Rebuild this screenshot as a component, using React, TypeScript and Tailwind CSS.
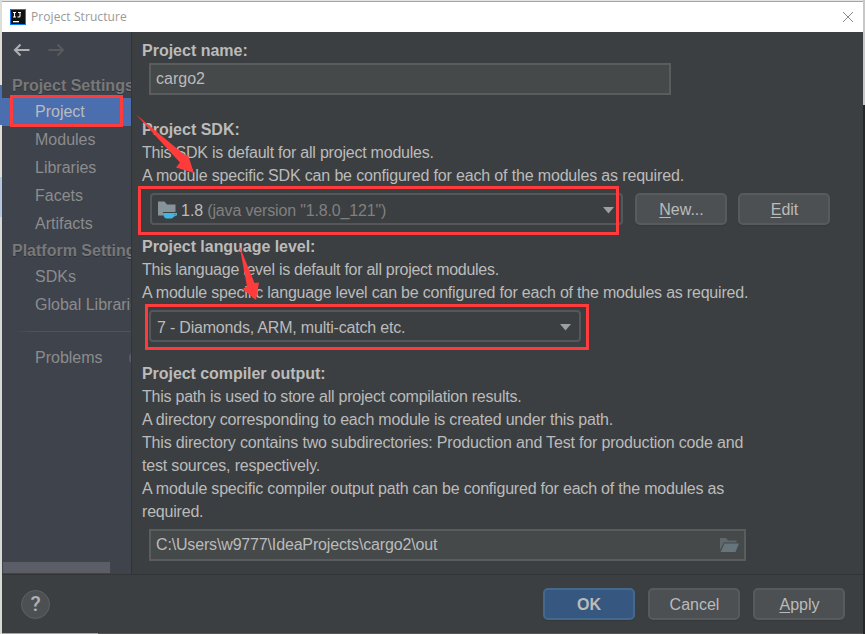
import React from "react";

const FONT = "font-['Liberation_Sans',Arial,sans-serif]";

function SideItem({ label, selected = false }: { label: string; selected?: boolean }) {
  return (
    <div
      className={
        selected
          ? "flex h-7 items-center bg-[#4b6eaf] pl-[33px] text-[#bbbbbb]"
          : "flex h-7 items-center pl-[33px] text-[#8c8c8c]"
      }
    >
      <span className="whitespace-nowrap">{label}</span>
    </div>
  );
}

function SideHeading({ label }: { label: string }) {
  return (
    <div className="flex h-[25px] items-center pt-px pl-2.5 font-bold whitespace-nowrap text-[#787878] [text-shadow:0_1px_0_#30333a]">
      {label}
    </div>
  );
}

function Button({ children, primary = false }: { children: React.ReactNode; primary?: boolean }) {
  return (
    <button
      className={
        primary
          ? "flex h-8 w-[92px] items-center justify-center rounded-[5px] border-2 border-[#43698e] bg-[#365880] pt-px font-bold text-[#bbbbbb] shadow-[0_1px_1px_#33363899]"
          : "flex h-8 w-[92px] items-center justify-center rounded-[5px] border-2 border-[#585b5c] bg-[#4c5052] pt-px pl-px text-[#bbbbbb] shadow-[0_1px_1px_#33363899]"
      }
    >
      {children}
    </button>
  );
}

function Key({ children }: { children: string }) {
  return <span className="underline decoration-1 underline-offset-2">{children}</span>;
}

function Caret() {
  return (
    <svg width="11" height="7" viewBox="0 0 11 7" className="shrink-0">
      <path d="M0 0h11L5.5 6.5z" fill="#9da0a2" />
    </svg>
  );
}

function Sidebar() {
  return (
    <aside className="flex w-[129px] shrink-0 flex-col overflow-hidden bg-[#3f434c]">
      <div className="flex h-[41px] gap-[18px] pt-[11px] pl-[11px]">
        <svg width="17" height="14" viewBox="0 0 17 14" fill="none" stroke="#afb1b3" strokeWidth="2.1">
          <path d="M16.5 7H2M7.5 1.5L2 7l5.5 5.5" />
        </svg>
        <svg width="17" height="14" viewBox="0 0 17 14" fill="none" stroke="#585a5c" strokeWidth="2.1">
          <path d="M0.500 7H15M9.500 1.500L15 7l-5.500 5.500" />
        </svg>
      </div>
      <div className="flex flex-col">
        <SideHeading label="Project Settings" />
        <SideItem label="Project" selected />
        <SideItem label="Modules" />
        <SideItem label="Libraries" />
        <SideItem label="Facets" />
        <SideItem label="Artifacts" />
        <SideHeading label="Platform Settings" />
        <SideItem label="SDKs" />
        <SideItem label="Global Libraries" />
        <div className="flex h-[25px] items-center">
          <div className="ml-2.5 h-px w-full bg-gradient-to-r from-[#3f434c] to-[#515357] to-20%" />
        </div>
        <div className="flex h-7 w-[150px] items-center pl-[33px] text-[#8c8c8c]">
          <span>Problems</span>
          <span className="ml-auto h-4 w-[23px] shrink-0 rounded-full bg-[#5b5e69]" />
        </div>
      </div>
      <div className="mt-auto mb-px ml-px h-[11px] w-[107px] bg-[#5b5e66]" />
    </aside>
  );
}

function Content() {
  return (
    <main className="flex min-w-0 grow flex-col border-l border-[#323436] pt-[7px] pl-[10px] leading-[23px] whitespace-nowrap text-[#bbbbbb]">
      <div className="h-6 font-bold">Project name:</div>
      <div className="ml-[7px] flex h-8 w-[522px] items-center border-2 border-[#5a5d5e] bg-[#45494a] pb-0.5 pl-[5px]">
        cargo2
      </div>

      <div className="mt-[23px] font-bold">Project SDK:</div>
      <div className="tracking-[-0.22px]">This SDK is default for all project modules.</div>
      <div className="tracking-[-0.16px]">A module specific SDK can be configured for each of the modules as required.</div>
      <div className="mt-[6px] ml-2 flex h-8">
        <div className="flex h-8 w-[473px] items-center rounded-[4px] border-2 border-[#55585a] pr-[7px] pl-[6px]">
          <svg width="20" height="20" viewBox="0 0 20 20" className="shrink-0">
            <path d="M0 2.500h6.500l2.500 3h8.500V13H5v3.500H0z" fill="#87939a" />
            <path d="M5 14h11.500v2.500c-1 1.700-2 3-3.500 3H9c-2 0-4-2-4-5.500z" fill="#40b6e0" />
            <path d="M16 14.600h2.400v1.300L15.500 17.200" fill="none" stroke="#40b6e0" strokeWidth="1.200" />
          </svg>
          <span className="ml-[3px] pt-0.5">1.8</span>
          <span className="ml-1 pt-0.5 tracking-[-0.16px] text-[#808080]">(java version "1.8.0_121")</span>
          <span className="mt-0.5 ml-auto">
            <Caret />
          </span>
        </div>
        <div className="ml-3 flex gap-[11px]">
          <Button>
            <span><Key>N</Key>ew...</span>
          </Button>
          <Button>
            <span><Key>E</Key>dit</span>
          </Button>
        </div>
      </div>

      <div className="mt-[10px] font-bold tracking-[-0.04px]">Project language level:</div>
      <div className="tracking-[-0.27px]">This language level is default for all project modules.</div>
      <div className="tracking-[-0.21px]">A module specific language level can be configured for each of the modules as required.</div>
      <div className="mt-[6px] ml-[7px] flex h-8 w-[432px] items-center justify-between rounded-[4px] border-2 border-[#55585a] pr-2 pl-[6px]">
        <span className="pt-0.5 tracking-[-0.2px]">7 - Diamonds, ARM, multi-catch etc.</span>
        <span className="mt-0.5 flex">
          <Caret />
        </span>
      </div>

      <div className="mt-5 font-bold tracking-[-0.06px]">Project compiler output:</div>
      <div className="tracking-[-0.23px]">This path is used to store all project compilation results.</div>
      <div className="tracking-[-0.19px]">A directory corresponding to each module is created under this path.</div>
      <div className="tracking-[-0.17px]">This directory contains two subdirectories: Production and Test for production code and</div>
      <div className="tracking-[-0.18px]">test sources, respectively.</div>
      <div className="tracking-[-0.2px]">A module specific compiler output path can be configured for each of the modules as</div>
      <div className="tracking-[-0.2px]">required.</div>
      <div className="mt-[6px] ml-[7px] flex h-8 w-[597px] items-center justify-between border-2 border-[#5a5d5e] bg-[#45494a] pr-[5px] pl-[5px]">
        <span className="pb-0.5 tracking-[-0.16px]">C:\Users\w9777\IdeaProjects\cargo2\out</span>
        <svg width="19" height="14" viewBox="0 0 19 14">
          <path d="M0 0h6l2 2.500h8.500v2H4L0 12z" fill="#5f686c" />
          <path d="M4.500 5.500H19L15.500 14H0.500z" fill="#66757b" />
        </svg>
      </div>
    </main>
  );
}

export default function App() {
  return (
    <div className={`relative flex h-[634px] w-[865px] overflow-hidden bg-[#e4e4e4] text-[16px] ${FONT}`}>
      <div className="flex w-0.5 shrink-0 flex-col">
        <div className="h-[85px] bg-[#deded9]" />
        <div className="h-10 bg-[#4b6eaf]" />
        <div className="h-[52px] bg-[#deded9]" />
        <div className="h-10 bg-[#b7c7df]" />
        <div className="grow bg-[#d8dad5]" />
      </div>
      <div className="flex w-[861px] shrink-0 flex-col pt-px">
        <header className="flex h-[31px] shrink-0 items-center border-t border-[#a5a5a5] bg-white pr-[9px] pl-2">
          <svg width="16" height="16" viewBox="0 0 16 16">
            <path d="M0 0h16v16H0z" fill="#087cfa" />
            <path d="M1 1h14v14H1z" fill="#111111" />
            <path d="M3 3.500h3M4.500 3.500v4.500M3 8h3M8 3.500h3M10 3.500V7q0 1-1 1H7.500" fill="none" stroke="#fff" strokeWidth="1.100" />
            <path d="M3 12h6v1.300H3z" fill="#fff" />
          </svg>
          <span className="ml-[5px] font-['Open_Sans','Noto_Sans',sans-serif] text-[12px] tracking-[0.08px] text-[#999999]">
            Project Structure
          </span>
          <svg width="12" height="12" viewBox="0 0 12 12" className="ml-auto" stroke="#888" strokeWidth="1">
            <path d="M1 1l10 10M11 1L1 11" />
          </svg>
        </header>
        <div className="flex h-[542px] shrink-0 bg-[#3c3f41]">
          <Sidebar />
          <Content />
        </div>
        <footer className="flex h-[59px] shrink-0 items-center border-t border-[#323436] bg-[#3c3f41] pr-[18px] pl-[19px]">
          <div className="flex size-[29px] items-center justify-center rounded-full border border-[#5e6162] bg-[#4c5052] pt-0.5 font-['Roboto',sans-serif] text-[21px] font-medium text-[#afb1b3]">
            ?
          </div>
          <div className="ml-auto flex gap-[13px]">
            <Button primary>OK</Button>
            <Button>Cancel</Button>
            <Button>
              <span><Key>A</Key>pply</span>
            </Button>
          </div>
        </footer>
        <div className="flex h-px">
          <div className="w-24 bg-[#a5a5a5]" />
          <div className="grow bg-[#555555]" />
        </div>
      </div>
      <div className="flex w-0.5 shrink-0 flex-col">
        <div className="h-[105px] bg-[#c8c8c8]" />
        <div className="grow bg-[#252729]" />
      </div>

      <div className="absolute top-[95px] left-[10px] h-8 w-[113px] border-3 border-[#ff3b3b]" />
      <div className="absolute top-[186px] left-[138px] h-[49px] w-[481px] border-3 border-[#ff3b3b]" />
      <div className="absolute top-[304px] left-[145px] h-[46px] w-[444px] border-3 border-[#ff3b3b]" />
      <svg className="absolute top-0 left-0" width="865" height="634" viewBox="0 0 865 634" fill="#ff3b3b">
        <path d="M136 114.500L184 154.500L188 155L194 173L176 167.500L180 162.500Z" />
        <path d="M239.500 246L254.500 283L259 282.500L256 300L242.500 289L247 286.500Z" />
      </svg>
    </div>
  );
}
